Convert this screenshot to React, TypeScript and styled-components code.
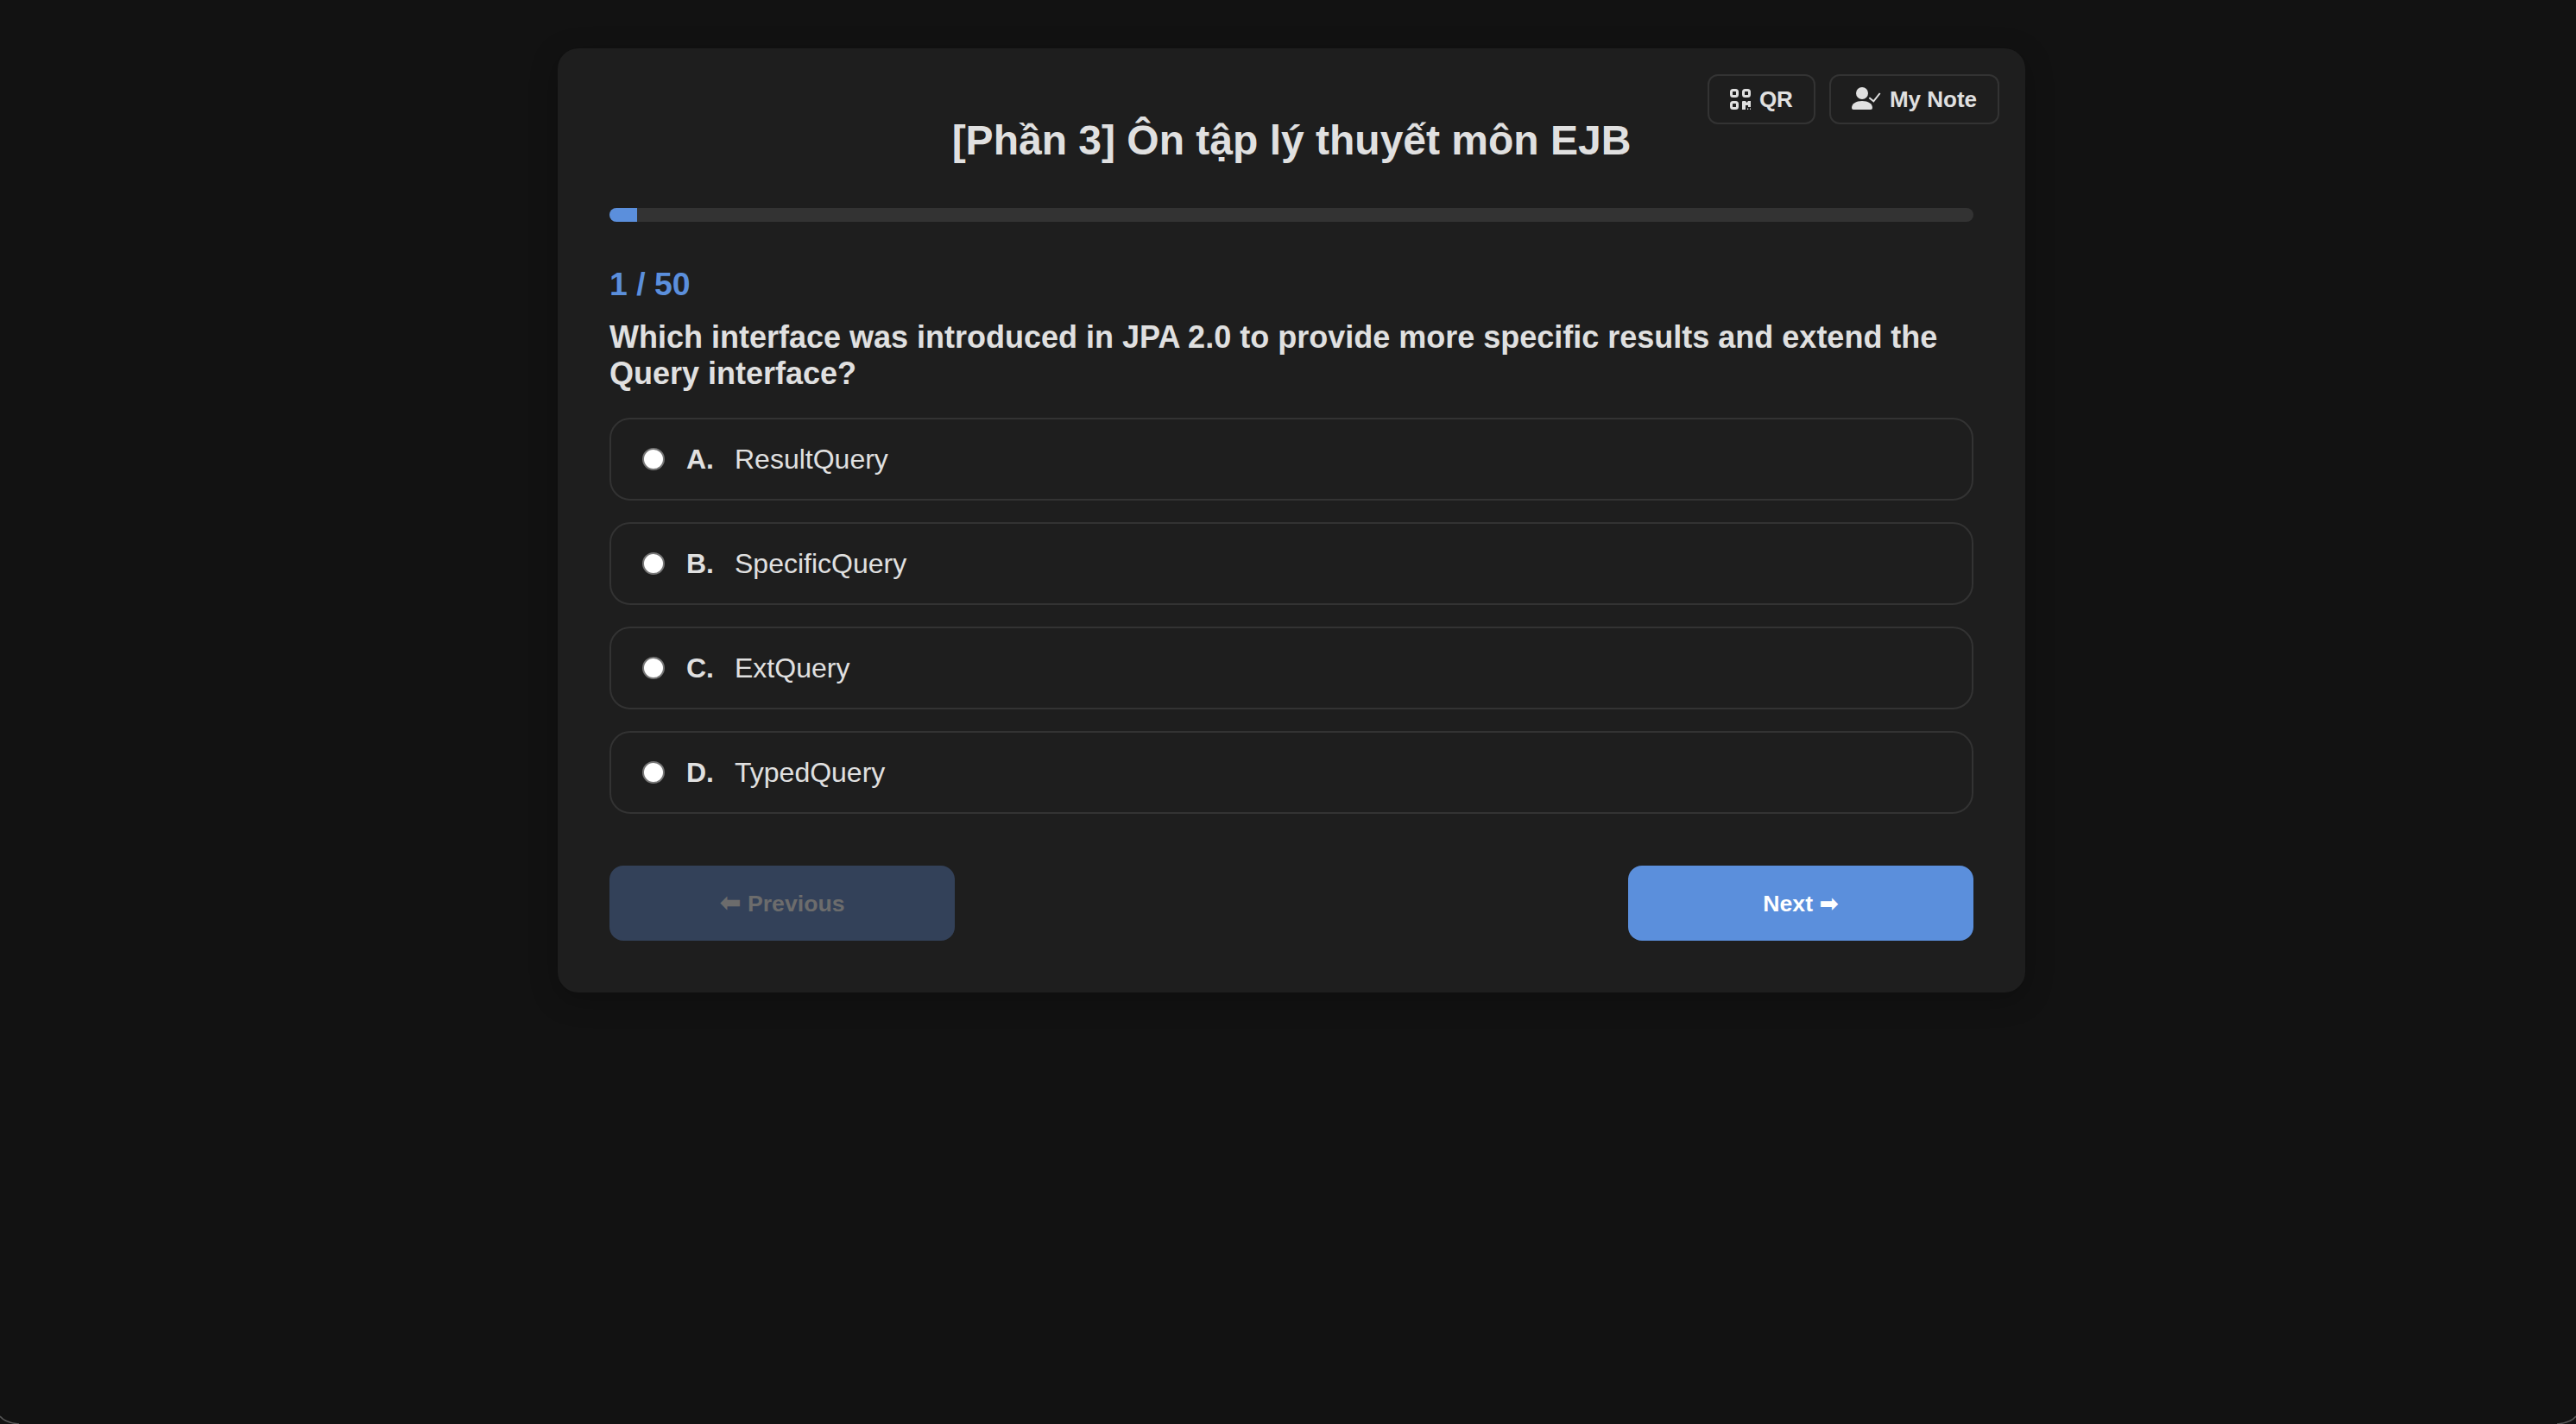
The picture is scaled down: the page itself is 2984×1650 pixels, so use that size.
import * as React from "react";
import styled, { createGlobalStyle } from "styled-components";

const GlobalStyle = createGlobalStyle`
  html, body {
    margin: 0;
    background: #121212;
  }
  body {
    font-family: "Liberation Sans", Arial, sans-serif;
    color: #e0e0e0;
  }
`;

const Page = styled.div`
  position: relative;
  height: 1650px;
  box-sizing: border-box;
  padding: 56px 0 0 8px;
  overflow: hidden;
`;

// the thin light arc of the window corner, bottom left and right
const WindowCorner = styled.svg<{ $right?: boolean }>`
  position: absolute;
  bottom: 0;
  ${(p) => (p.$right ? "right: 0; transform: scaleX(-1);" : "left: 0;")}
  width: 24px;
  height: 10px;
`;

const Card = styled.main`
  position: relative;
  box-sizing: border-box;
  width: 1700px;
  height: 1094px;
  margin: 0 auto;
  padding: 60px;
  background: #1e1e1e;
  border-radius: 24px;
  box-shadow: 0 8px 32px rgba(0, 0, 0, 0.25);
`;

const TopActions = styled.div`
  position: absolute;
  top: 30px;
  right: 30px;
  display: flex;
  gap: 16px;
`;

const ActionButton = styled.button`
  display: flex;
  align-items: center;
  gap: 10px;
  height: 58px;
  padding: 0 24px;
  background: transparent;
  border: 2px solid #333;
  border-radius: 12px;
  color: #e0e0e0;
  font: bold 26px "Liberation Sans", Arial, sans-serif;
`;

const Title = styled.h1`
  margin: 19px 0 50px;
  text-align: center;
  font-size: 48px;
  line-height: 56px;
  font-weight: bold;
  color: #e0e0e0;
`;

const ProgressTrack = styled.div`
  height: 16px;
  margin-bottom: 49px;
  background: #333;
  border-radius: 10px;
  overflow: hidden;
`;

const ProgressFill = styled.div`
  height: 100%;
  background: #5b8fdc;
`;

const Counter = styled.div`
  margin-bottom: 18px;
  font-size: 37.44px;
  line-height: 46px;
  font-weight: bold;
  color: #5b8fdc;
`;

const Question = styled.h2`
  margin: 0 0 30px;
  font-size: 36px;
  line-height: 42px;
  font-weight: bold;
  color: #e0e0e0;
`;

const OptionList = styled.div`
  display: flex;
  flex-direction: column;
  gap: 25px;
`;

const OptionRow = styled.label`
  display: flex;
  align-items: center;
  box-sizing: border-box;
  height: 96px;
  padding: 0 36px;
  border: 2px solid #333;
  border-radius: 24px;
  font-size: 32px;
`;

const Radio = styled.span`
  box-sizing: border-box;
  width: 26px;
  height: 26px;
  margin-right: 25px;
  background: #fff;
  border: 2px solid #767676;
  border-radius: 50%;
`;

const OptionLetter = styled.strong`
  width: 56px;
  font-weight: bold;
`;

const Footer = styled.div`
  display: flex;
  justify-content: space-between;
  margin-top: 60px;
`;

const NavButton = styled.button<{ $disabled?: boolean }>`
  width: 400px;
  height: 87px;
  padding: 0;
  border: none;
  border-radius: 16px;
  background: ${(p) => (p.$disabled ? "#334159" : "#5b8fdc")};
  color: ${(p) => (p.$disabled ? "#6c6c6c" : "#fff")};
  font: bold 26.67px "Liberation Sans", "DejaVu Sans", sans-serif;
`;

const BackArrow = styled.span`
  font-size: 30px;
  line-height: 1;
`;

const QrIcon = () => (
  <svg width="24" height="24" viewBox="0 0 24 24" fill="currentColor">
    <g fill="none" stroke="currentColor" strokeWidth="3">
      <rect x="1.5" y="1.500" width="7" height="7" rx="2" />
      <rect x="15.5" y="1.500" width="7" height="7" rx="2" />
      <rect x="1.5" y="15.500" width="7" height="7" rx="2" />
    </g>
    <path d="M14 15a1 1 0 0 1 1-1h3l1.500 2 1.500-2h3v7h-3v-2h-3v5h-4z" />
    <path d="M20 22.500h1.200V24H20zM23 22.500h1V24h-1z" />
  </svg>
);

const PersonCheckIcon = () => (
  <svg width="34" height="28" viewBox="0 0 34 28" fill="currentColor">
    <circle cx="12" cy="7" r="7" />
    <path d="M0 24c0-5 5-8 12-8s12 3 12 8a2 2 0 0 1-2 2H2a2 2 0 0 1-2-2z" />
    <path d="M20.300 12.300l5 4 7.400-9.300" fill="none" stroke="currentColor" strokeWidth="2" />
  </svg>
);

const options = [
  { letter: "A.", text: "ResultQuery" },
  { letter: "B.", text: "SpecificQuery" },
  { letter: "C.", text: "ExtQuery" },
  { letter: "D.", text: "TypedQuery" },
];

const current = 1;
const total = 50;

export default function App() {
  return (
    <Page>
      <GlobalStyle />
      <Card>
        <TopActions>
          <ActionButton>
            <QrIcon />
            QR
          </ActionButton>
          <ActionButton>
            <PersonCheckIcon />
            My Note
          </ActionButton>
        </TopActions>
        <Title>[Phần 3] Ôn tập lý thuyết môn EJB</Title>
        <ProgressTrack>
          <ProgressFill style={{ width: `${(current / total) * 100}%` }} />
        </ProgressTrack>
        <Counter>
          {current} / {total}
        </Counter>
        <Question>
          Which interface was introduced in JPA 2.0 to provide more specific results and extend the Query interface?
        </Question>
        <OptionList>
          {options.map((o) => (
            <OptionRow key={o.letter}>
              <Radio />
              <OptionLetter>{o.letter}</OptionLetter>
              {o.text}
            </OptionRow>
          ))}
        </OptionList>
        <Footer>
          <NavButton $disabled>
            <BackArrow>⬅</BackArrow> Previous
          </NavButton>
          <NavButton>Next ➡</NavButton>
        </Footer>
      </Card>
      <WindowCorner viewBox="0 0 24 10">
        <path d="M0 1C4 6 10 9 22 10" fill="none" stroke="#555" strokeWidth="1.5" />
      </WindowCorner>
      <WindowCorner $right viewBox="0 0 24 10">
        <path d="M0 1C4 6 10 9 22 10" fill="none" stroke="#555" strokeWidth="1.5" />
      </WindowCorner>
    </Page>
  );
}
